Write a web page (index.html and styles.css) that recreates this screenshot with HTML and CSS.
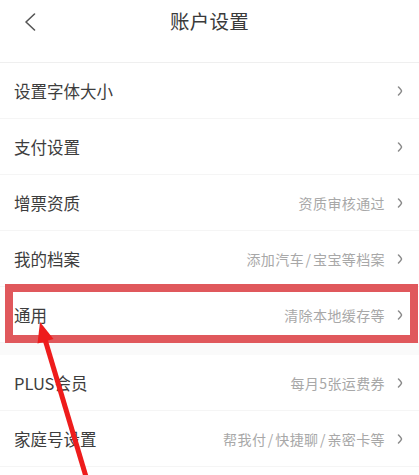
FILE: index.html
```html
<!DOCTYPE html>
<html lang="zh">
<head>
<meta charset="utf-8">
<title>账户设置</title>
<link rel="stylesheet" href="styles.css">
</head>
<body>
<div class="page">
  <header class="topbar">
    <svg class="back" width="12" height="18" viewBox="0 0 12 18"><path d="M10.5 1 L2 9 L10.5 17" fill="none" stroke="#555" stroke-width="1.6" stroke-linecap="round" stroke-linejoin="round"/></svg>
    <h1 class="title">账户设置</h1>
  </header>
  <ul class="list">
    <li class="row"><span class="label">设置字体大小</span><span class="right"><svg class="chev" width="6" height="10" viewBox="0 0 6 10"><path d="M1.5 1 Q4.5 4 4.5 5 Q4.5 6 1.5 9" fill="none" stroke="#8a8a8a" stroke-width="1.5" stroke-linecap="round"/></svg></span></li>
    <li class="row"><span class="label">支付设置</span><span class="right"><svg class="chev" width="6" height="10" viewBox="0 0 6 10"><path d="M1.5 1 Q4.5 4 4.5 5 Q4.5 6 1.5 9" fill="none" stroke="#8a8a8a" stroke-width="1.5" stroke-linecap="round"/></svg></span></li>
    <li class="row"><span class="label">增票资质</span><span class="right"><span class="sub">资质审核通过</span><svg class="chev" width="6" height="10" viewBox="0 0 6 10"><path d="M1.5 1 Q4.5 4 4.5 5 Q4.5 6 1.5 9" fill="none" stroke="#8a8a8a" stroke-width="1.5" stroke-linecap="round"/></svg></span></li>
    <li class="row"><span class="label">我的档案</span><span class="right"><span class="sub">添加汽车 / 宝宝等档案</span><svg class="chev" width="6" height="10" viewBox="0 0 6 10"><path d="M1.5 1 Q4.5 4 4.5 5 Q4.5 6 1.5 9" fill="none" stroke="#8a8a8a" stroke-width="1.5" stroke-linecap="round"/></svg></span></li>
    <li class="row"><span class="label">通用</span><span class="right"><span class="sub">清除本地缓存等</span><svg class="chev" width="6" height="10" viewBox="0 0 6 10"><path d="M1.5 1 Q4.5 4 4.5 5 Q4.5 6 1.5 9" fill="none" stroke="#8a8a8a" stroke-width="1.5" stroke-linecap="round"/></svg></span></li>
  </ul>
  <div class="gap"></div>
  <ul class="list">
    <li class="row"><span class="label">PLUS会员</span><span class="right"><span class="sub">每月5张运费券</span><svg class="chev" width="6" height="10" viewBox="0 0 6 10"><path d="M1.5 1 Q4.5 4 4.5 5 Q4.5 6 1.5 9" fill="none" stroke="#8a8a8a" stroke-width="1.5" stroke-linecap="round"/></svg></span></li>
    <li class="row"><span class="label">家庭号设置</span><span class="right"><span class="sub">帮我付 / 快捷聊 / 亲密卡等</span><svg class="chev" width="6" height="10" viewBox="0 0 6 10"><path d="M1.5 1 Q4.5 4 4.5 5 Q4.5 6 1.5 9" fill="none" stroke="#8a8a8a" stroke-width="1.5" stroke-linecap="round"/></svg></span></li>
  </ul>
  <div class="highlight"></div>
  <svg class="arrow" width="419" height="475" viewBox="0 0 419 475">
    <line x1="44" y1="336" x2="87" y2="480" stroke="#ee1c1c" stroke-width="5"/>
    <polygon points="40,322 53.5,339 37.5,343.5" fill="#ee1c1c"/>
  </svg>
</div>
</body>
</html>
```

FILE: styles.css
```css
* { box-sizing: border-box; }
html, body { margin: 0; padding: 0; background: #fff; }
body { font-family: "Noto Sans CJK SC", "Noto Sans", sans-serif; color: #333; }
.page { position: relative; width: 419px; height: 475px; overflow: hidden; background: #fff; }
.topbar { height: 63px; border-bottom: 1px solid #efefef; display: flex; align-items: flex-start; justify-content: center; position: relative; }
.back { position: absolute; left: 24px; top: 13px; }
.title { margin: 7px 0 0 0; font-size: 19.5px; font-weight: 400; color: #3a3a3a; line-height: 28px; letter-spacing: 0.3px; }
.list { list-style: none; margin: 0; padding: 0; }
.row { height: 56px; display: flex; align-items: center; justify-content: space-between; padding: 0 16px 0 14px; border-bottom: 1px solid #f5f5f5; }
.label { font-size: 16.5px; color: #3d3d3d; }
.right { display: flex; align-items: center; gap: 12px; }
.sub { font-size: 14px; color: #a8a8a8; letter-spacing: 0.4px; word-spacing: -2px; }
.chev { display: block; }
.gap { height: 12px; background: #fafafa; }
.highlight { position: absolute; left: 5px; top: 284px; width: 413px; height: 59px; border: 8px solid #e0585c; }
.arrow { position: absolute; left: 0; top: 0; pointer-events: none; }
```
